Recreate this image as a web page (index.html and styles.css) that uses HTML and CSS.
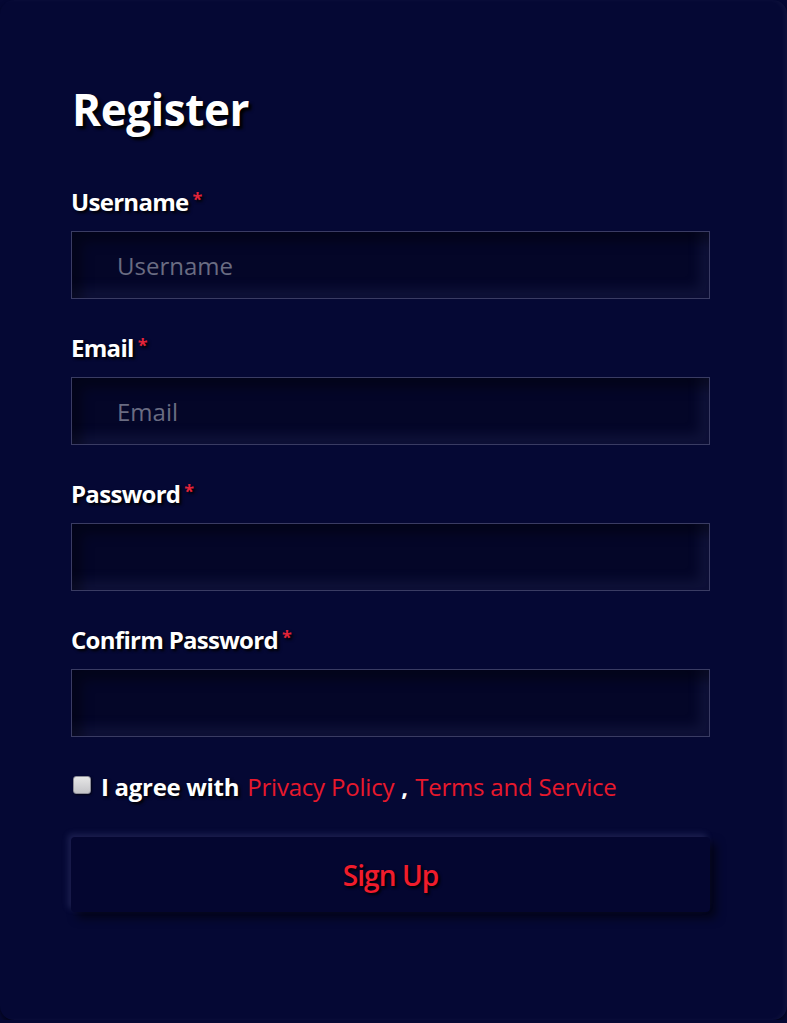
FILE: index.html
```html
<!DOCTYPE html>
<html lang="en">
<head>
<meta charset="utf-8">
<title>Register</title>
<link rel="stylesheet" href="styles.css">
</head>
<body>
<div class="card">
  <h1 class="title">Register</h1>
  <form class="form">
    <div class="field">
      <label class="label">Username<span class="req">*</span></label>
      <input class="input" type="text" placeholder="Username">
    </div>
    <div class="field">
      <label class="label">Email<span class="req">*</span></label>
      <input class="input" type="email" placeholder="Email">
    </div>
    <div class="field">
      <label class="label">Password<span class="req">*</span></label>
      <input class="input" type="password">
    </div>
    <div class="field">
      <label class="label">Confirm Password<span class="req">*</span></label>
      <input class="input" type="password">
    </div>
    <div class="agree">
      <input class="check" type="checkbox">
      <span class="agree-text">I agree with</span>
      <a class="link" href="#">Privacy Policy</a>
      <span class="comma">,</span>
      <a class="link" href="#">Terms and Service</a>
    </div>
    <button class="btn" type="button">Sign Up</button>
  </form>
</div>
</body>
</html>
```

FILE: styles.css
```css
html, body {
  margin: 0;
  padding: 0;
  background: #050834;
}
body {
  font-family: "Open Sans", "Noto Sans", sans-serif;
  color: #ffffff;
}
.card {
  box-sizing: border-box;
  width: 787px;
  height: 1020px;
  background: #050834;
  border-radius: 14px;
  box-shadow: inset -3px 0 4px rgba(255,255,255,0.04), 0 3px 4px rgba(0,0,0,0.5);
  padding: 80px 77px 0 71px;
}
.title {
  margin: 0 0 0 1px;
  font-size: 44px;
  font-weight: 700;
  line-height: 58px;
  letter-spacing: -0.4px;
  text-shadow: 3px 3px 3px #000000;
}
.form {
  display: flex;
  flex-direction: column;
  margin-top: 45px;
}
.field {
  display: flex;
  flex-direction: column;
  margin-bottom: 30px;
}
.label {
  font-size: 24px;
  font-weight: 700;
  line-height: 32px;
  margin: 0 0 13px 0;
  letter-spacing: -0.7px;
  text-shadow: 2px 2px 3px #000000;
}
.req {
  color: #e2233a;
  font-size: 18px;
  margin-left: 4px;
  vertical-align: 5px;
}
.input {
  box-sizing: border-box;
  height: 68px;
  width: 639px;
  border: 1px solid #3a3c63;
  background: #040628;
  box-shadow: inset 10px 10px 12px rgba(0,0,0,0.35), inset -10px -10px 12px rgba(60,64,130,0.18);
  padding: 0 0 0 45px;
  font-family: "Open Sans", sans-serif;
  font-size: 24px;
  color: #ffffff;
  outline: none;
}
.input::placeholder {
  color: #6a6c82;
}
.agree {
  display: flex;
  align-items: center;
  margin-top: 4px;
  font-size: 24px;
  line-height: 32px;
}
.check {
  appearance: none;
  -webkit-appearance: none;
  box-sizing: border-box;
  width: 18px;
  height: 18px;
  margin: 0 10px 4px 2px;
  border: 1px solid #8e8e98;
  border-radius: 3px;
  background: linear-gradient(#e6e6e6, #c4c4c8);
  box-shadow: 1px 1px 2px rgba(0,0,0,0.6);
}
.agree-text {
  font-weight: 700;
  letter-spacing: -0.3px;
  margin-right: 8px;
  text-shadow: 2px 2px 3px #000;
}
.link {
  color: #e8192c;
  text-decoration: none;
  letter-spacing: -0.2px;
}
.comma {
  margin: 0 7px;
  font-weight: 700;
}
.btn {
  margin-top: 34px;
  width: 639px;
  height: 75px;
  border: none;
  border-radius: 4px;
  background: #040630;
  box-shadow: -3px -3px 6px rgba(120,125,190,0.22), 6px 6px 10px rgba(0,0,0,0.55);
  color: #f01c2c;
  font-family: "Open Sans", sans-serif;
  font-size: 28px;
  font-weight: 600;
  letter-spacing: -0.9px;
  text-shadow: 2px 2px 3px #000;
  cursor: pointer;
}
```
